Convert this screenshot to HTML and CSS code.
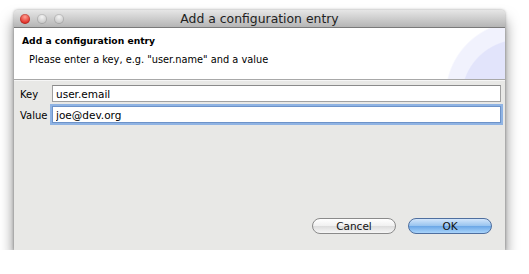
FILE: index.html
```html
<!DOCTYPE html>
<html lang="en">
<head>
    <meta charset="UTF-8">
    <title>Add a configuration entry</title>
    <link rel="stylesheet" href="styles.css">
</head>
<body>
    <div class="window">
        <div class="titlebar">
            <div class="lights">
                <span class="light close"></span>
                <span class="light"></span>
                <span class="light"></span>
            </div>
            <div class="title">Add a configuration entry</div>
        </div>
        <div class="banner">
            <div class="banner-title">Add a configuration entry</div>
            <div class="banner-msg">Please enter a key, e.g. "user.name" and a value</div>
        </div>
        <div class="form">
            <div class="row">
                <label for="key">Key</label>
                <input type="text" id="key" value="user.email">
            </div>
            <div class="row">
                <label for="value">Value</label>
                <input type="text" id="value" class="focused" value="joe@dev.org">
            </div>
        </div>
        <div class="buttons">
            <button class="btn">Cancel</button>
            <button class="btn default">OK</button>
        </div>
    </div>
</body>
</html>
```

FILE: styles.css
```css
body {
    margin: 0;
    background: #fff;
    font-family: "DejaVu Sans", sans-serif;
    font-size: 11px;
    color: #000;
}
.window {
    margin: 10px 0 0 14px;
    width: 491px;
    height: 240px;
    display: flex;
    flex-direction: column;
    background: #e8e8e6;
    box-shadow: 0 10px 14px rgba(0, 0, 0, 0.5), 0 0 3px rgba(0, 0, 0, 0.35);
    border-radius: 4px 4px 0 0;
}
.titlebar {
    height: 17px;
    display: flex;
    align-items: center;
    background: linear-gradient(#e6e6e6, #b5b5b5);
    border-bottom: 1px solid #7a7a7a;
    border-radius: 4px 4px 0 0;
    position: relative;
}
.lights {
    display: flex;
    gap: 7px;
    padding-left: 6px;
}
.light {
    width: 10px;
    height: 10px;
    border-radius: 50%;
    background: radial-gradient(circle at 50% 30%, #f4f4f4, #c8c8c8 70%, #ababab);
    box-shadow: inset 0 0 0 1px rgba(0, 0, 0, 0.15);
}
.light.close {
    background: radial-gradient(circle at 50% 30%, #ffa093, #e2332b 65%, #a8190f);
}
.title {
    position: absolute;
    left: 0;
    right: 0;
    text-align: center;
    font-size: 12.4px;
    color: #222;
}
.banner {
    height: 52px;
    background:
        radial-gradient(circle 59px at 506px 70px, #e2e4fb 98%, transparent 100%),
        radial-gradient(circle 75px at 506px 68px, #f1f2fd 98%, transparent 100%),
        #fff;
    border-bottom: 1px solid #a8a8a8;
    box-shadow: 0 1px 0 #f6f6f6;
    padding: 7px 0 0 8px;
    box-sizing: border-box;
}
.banner-title {
    font-weight: bold;
    font-size: 9.2px;
}
.banner-msg {
    margin-top: 8px;
    padding-left: 7px;
    font-size: 9.8px;
}
.form {
    flex: 1;
    padding: 5px 4px 0 6px;
    display: flex;
    flex-direction: column;
    gap: 4px;
}
.row {
    display: flex;
    align-items: center;
}
label {
    width: 32px;
    font-size: 10px;
    padding-top: 1px;
}
input {
    flex: 1;
    height: 17px;
    box-sizing: border-box;
    border: 1px solid #a0a0a0;
    border-top-color: #8a8a8a;
    background: #fff;
    font-family: "DejaVu Sans", sans-serif;
    font-size: 10.5px;
    padding: 0 3px;
    margin: 0;
    outline: none;
}
input.focused {
    border-color: #6d93c9;
    box-shadow: 0 0 0 2px #8fb3e3;
}
.buttons {
    display: flex;
    justify-content: flex-end;
    gap: 12px;
    padding: 0 13px 16px 0;
}
.btn {
    width: 84px;
    height: 16px;
    border-radius: 8px;
    border: 1px solid #8a8a8a;
    background: linear-gradient(#ffffff, #f0f0f0 50%, #dcdcdc 51%, #f6f6f6);
    font-family: "DejaVu Sans", sans-serif;
    font-size: 10.5px;
    line-height: 14px;
    padding: 0;
    color: #111;
}
.btn.default {
    border-color: #4f6f9f;
    background: linear-gradient(#d3e6fb, #97c3ef 50%, #6aa6e6 51%, #a9d4fb);
}
```
